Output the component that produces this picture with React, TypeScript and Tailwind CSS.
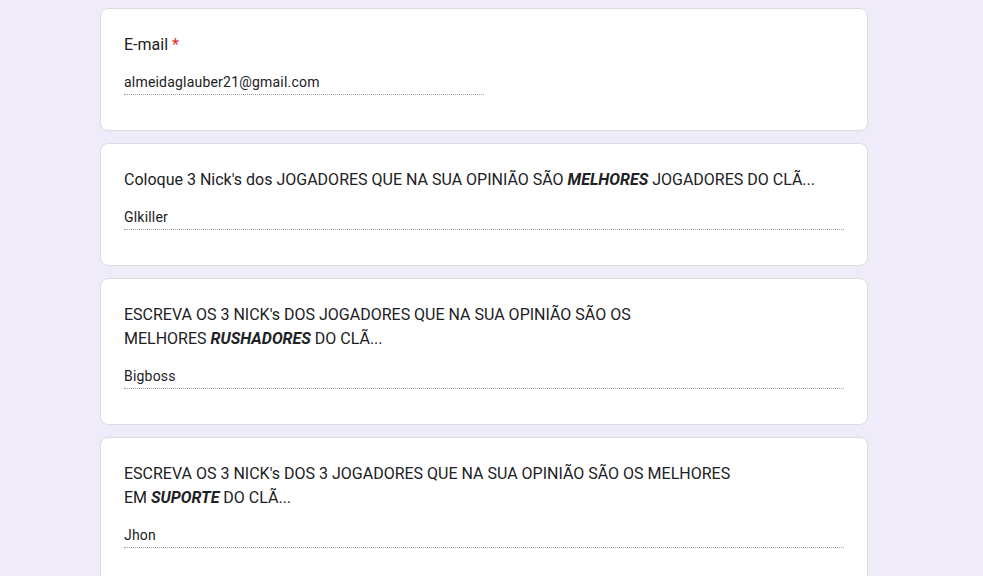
import React from 'react';

type Question = {
	title: React.ReactNode;
	answer: string;
	narrow?: boolean;
};

const questions: Question[] = [
	{
		title: (
			<>
				E-mail <span className="text-[#d93025]">*</span>
			</>
		),
		answer: 'almeidaglauber21@gmail.com',
		narrow: true,
	},
	{
		title: (
			<>
				Coloque 3 Nick's dos JOGADORES QUE NA SUA OPINIÃO SÃO{' '}
				<b className="italic font-bold">MELHORES</b> JOGADORES DO CLÃ...
			</>
		),
		answer: 'Glkiller',
	},
	{
		title: (
			<>
				ESCREVA OS 3 NICK's DOS JOGADORES QUE NA SUA OPINIÃO SÃO OS
				<br />
				MELHORES <b className="italic font-bold">RUSHADORES</b> DO CLÃ...
			</>
		),
		answer: 'Bigboss',
	},
	{
		title: (
			<>
				ESCREVA OS 3 NICK's DOS 3 JOGADORES QUE NA SUA OPINIÃO SÃO OS MELHORES
				<br />
				EM <b className="italic font-bold">SUPORTE</b> DO CLÃ...
			</>
		),
		answer: 'Jhon',
	},
];

function QuestionCard({ q }: { q: Question }) {
	return (
		<div className="bg-white border border-[#dadce0] rounded-lg px-[23px] pt-6 pb-[35px]">
			<div className="text-[16px] leading-6 tracking-normal text-[#202124]">
				{q.title}
			</div>
			<div
				className={`mt-[15px] pb-[2px] text-[14px] leading-5 tracking-[0.2px] text-[#202124] border-b border-dotted border-[#9e9e9e] ${
					q.narrow ? 'w-[360px]' : 'w-full'
				}`}>
				{q.answer}
			</div>
		</div>
	);
}

export default function App() {
	return (
		<div
			className="h-[576px] overflow-hidden bg-[#f0ebf8] pl-[100px] pt-2"
			style={{ fontFamily: 'Roboto, Arial, sans-serif' }}>
			<div className="w-[768px] flex flex-col gap-3">
				{questions.map((q, i) => (
					<QuestionCard key={i} q={q} />
				))}
			</div>
		</div>
	);
}
